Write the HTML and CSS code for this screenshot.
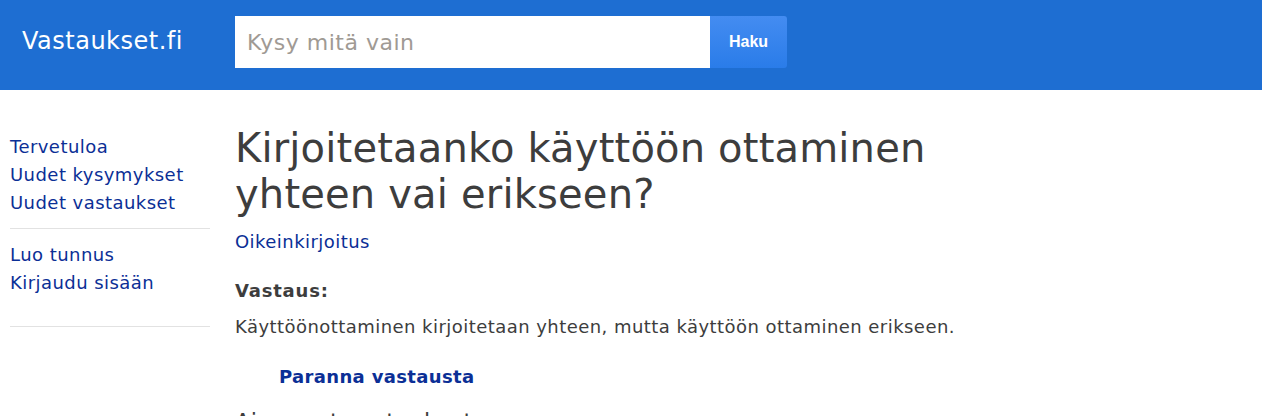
FILE: index.html
```html
<!DOCTYPE html>
<html lang="fi">
<head>
<meta charset="utf-8">
<title>Vastaukset.fi</title>
<link rel="stylesheet" href="styles.css">
</head>
<body>
<header class="topbar">
  <a class="logo" href="#">Vastaukset.fi</a>
  <form class="search">
    <input class="search-input" type="text" placeholder="Kysy mitä vain">
    <button class="search-btn" type="button">Haku</button>
  </form>
</header>
<div class="page">
  <nav class="sidebar">
    <ul class="nav-group">
      <li><a href="#">Tervetuloa</a></li>
      <li><a href="#">Uudet kysymykset</a></li>
      <li><a href="#">Uudet vastaukset</a></li>
    </ul>
    <ul class="nav-group">
      <li><a href="#">Luo tunnus</a></li>
      <li><a href="#">Kirjaudu sisään</a></li>
    </ul>
  </nav>
  <main class="content">
    <h1 class="question">Kirjoitetaanko käyttöön ottaminen yhteen vai erikseen?</h1>
    <a class="category" href="#">Oikeinkirjoitus</a>
    <h3 class="answer-label">Vastaus:</h3>
    <p class="answer">Käyttöönottaminen kirjoitetaan yhteen, mutta käyttöön ottaminen erikseen.</p>
    <a class="improve" href="#">Paranna vastausta</a>
    <h2 class="section">Aiemmat vastaukset</h2>
  </main>
</div>
</body>
</html>
```
FILE: styles.css
```css
html, body {
  margin: 0;
  padding: 0;
}
body {
  font-family: "DejaVu Sans", Verdana, sans-serif;
  color: #3d3d3d;
  background: #fff;
  letter-spacing: 0.45px;
}
a {
  color: #0b2f96;
  text-decoration: none;
}
.topbar {
  height: 90px;
  background: #1e6ed2;
  display: flex;
  align-items: flex-start;
}
.logo {
  color: #fff;
  font-size: 24px;
  line-height: 28px;
  letter-spacing: 0.5px;
  margin: 27px 0 0 22px;
  width: 213px;
}
.search {
  display: flex;
  margin-top: 16px;
}
.search-input {
  box-sizing: border-box;
  width: 475px;
  height: 52px;
  border: 0;
  margin: 0;
  padding: 0 12px;
  font-family: "DejaVu Sans", Verdana, sans-serif;
  font-size: 22px;
  letter-spacing: 0.5px;
  color: #333;
  outline: none;
}
.search-input::placeholder {
  color: #a09a94;
}
.search-btn {
  box-sizing: border-box;
  width: 77px;
  height: 52px;
  border: 0;
  margin: 0;
  border-radius: 0 3px 3px 0;
  background: linear-gradient(#448cf1, #2a7ce9);
  color: #fff;
  font-family: "Liberation Sans", Arial, sans-serif;
  font-weight: bold;
  font-size: 16px;
  letter-spacing: 0;
}
.page {
  display: flex;
  padding-top: 43px;
}
.sidebar {
  width: 200px;
  margin-left: 10px;
  flex-shrink: 0;
}
.nav-group {
  list-style: none;
  margin: 0 0 12px;
  padding: 0 0 11px;
  border-bottom: 1px solid #e2e2e2;
}
.nav-group + .nav-group {
  padding-bottom: 29px;
}
.nav-group li {
  font-size: 18px;
  line-height: 28px;
}
.content {
  margin-left: 25px;
  margin-top: -8px;
  width: 740px;
}
.question {
  font-size: 40px;
  font-weight: normal;
  line-height: 46px;
  letter-spacing: 0.18px;
  margin: 0 0 11px;
  color: #3d3d3d;
}
.category {
  display: block;
  font-size: 18px;
  line-height: 28px;
}
.answer-label {
  font-size: 18px;
  font-weight: bold;
  line-height: 28px;
  letter-spacing: 0.8px;
  margin: 21px 0 8px;
}
.answer {
  font-size: 18px;
  line-height: 28px;
  margin: 0;
}
.improve {
  display: block;
  font-weight: bold;
  font-size: 18px;
  line-height: 28px;
  letter-spacing: 0.35px;
  margin: 22px 0 0 44px;
}
.section {
  font-size: 22.5px;
  font-weight: normal;
  letter-spacing: 0.3px;
  margin: 18px 0 0;
}
```
